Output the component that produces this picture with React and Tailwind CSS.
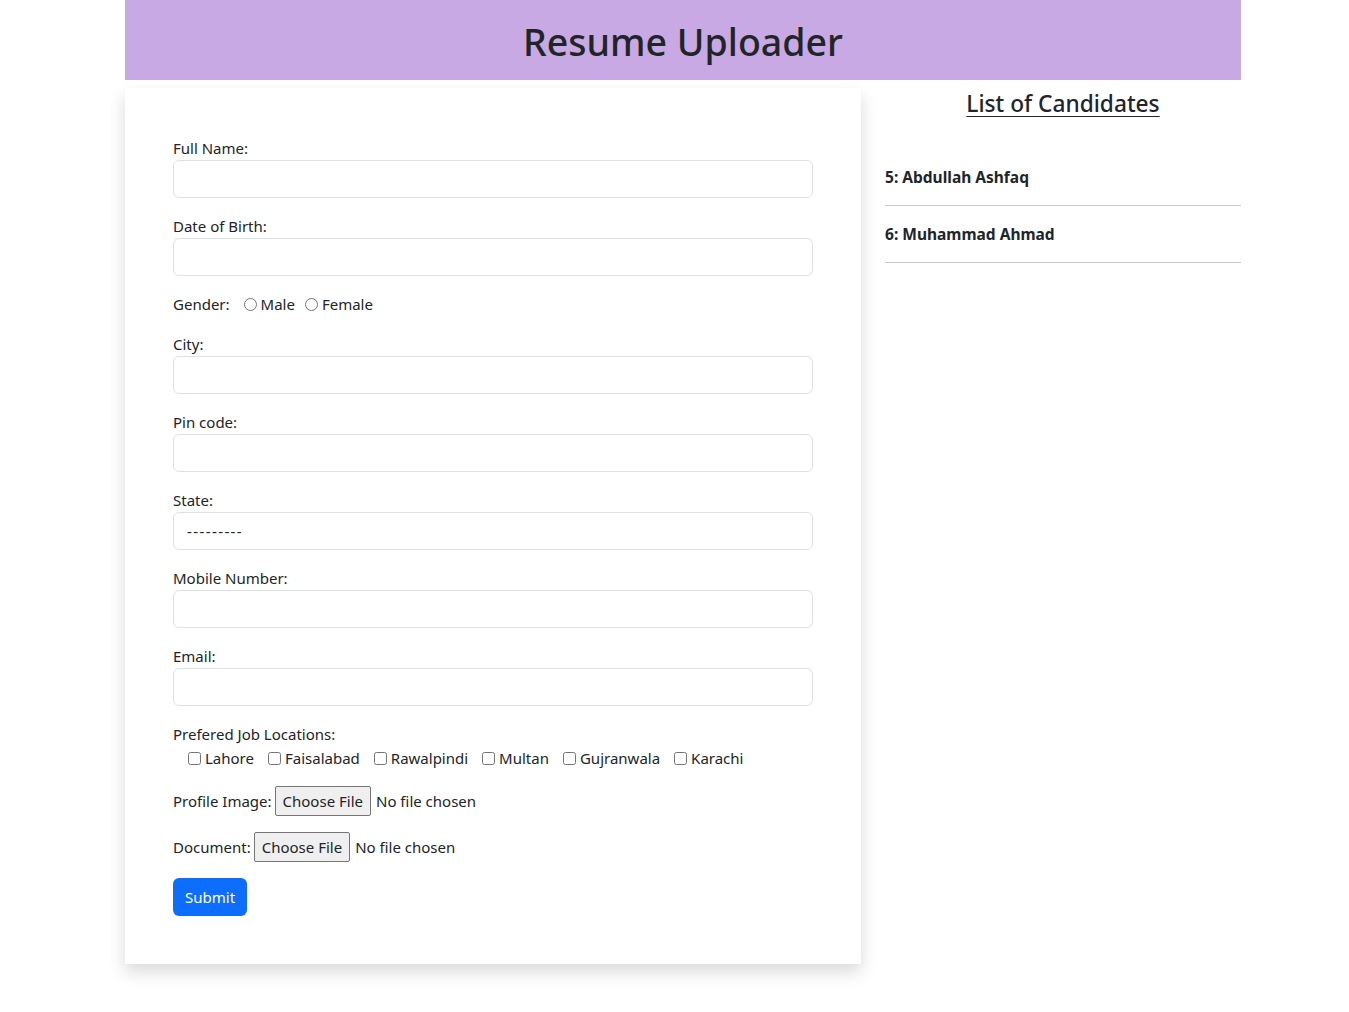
import React from "react";

const cities = ["Lahore", "Faisalabad", "Rawalpindi", "Multan", "Gujranwala", "Karachi"];
const candidates = [
  { id: 5, name: "Abdullah Ashfaq" },
  { id: 6, name: "Muhammad Ahmad" },
];

function Field({ label, children }) {
  return (
    <div className="mb-4">
      <label className="block leading-6">{label}</label>
      {children}
    </div>
  );
}

function TextBox({ value }) {
  return (
    <div className="h-[38px] w-full rounded-[6px] border border-[#dee2e6] bg-white px-[13px] flex items-center">
      {value}
    </div>
  );
}

function FilePick({ label }) {
  return (
    <div className="mb-4 flex items-center h-[30px]">
      <span>{label}</span>
      <span className="ml-[3px] h-[30px] flex items-center rounded-[2px] border border-[#767676] bg-[#efefef] px-[7px]">
        Choose File
      </span>
      <span className="ml-[5px]">No file chosen</span>
    </div>
  );
}

export default function App() {
  return (
    <div
      className="min-h-screen bg-white text-[#212529] text-[15px]"
      style={{ fontFamily: '"Noto Sans", "Open Sans", sans-serif' }}
    >
      <div className="ml-[125px] w-[1116px]">
        <div className="h-[80px] bg-[#c8a9e4] flex items-center justify-center pt-1">
          <h1 className="text-[37.5px] font-medium leading-none">Resume Uploader</h1>
        </div>

        <div className="flex gap-6 mt-2">
          <div className="w-[736px] bg-white px-12 pt-12 pb-12 shadow-[0_0.5rem_1rem_rgba(0,0,0,0.15)]">
            <Field label="Full Name:">
              <TextBox />
            </Field>
            <Field label="Date of Birth:">
              <TextBox />
            </Field>
            <div className="mb-4 flex items-center h-6">
              <span>Gender:</span>
              <input type="radio" name="g" className="ml-[14px] mr-1 h-[13px] w-[13px]" />
              <span>Male</span>
              <input type="radio" name="g" className="ml-[10px] mr-1 h-[13px] w-[13px]" />
              <span>Female</span>
            </div>
            <Field label="City:">
              <TextBox />
            </Field>
            <Field label="Pin code:">
              <TextBox />
            </Field>
            <Field label="State:">
              <TextBox value={<span className="tracking-[1.4px]">---------</span>} />
            </Field>
            <Field label="Mobile Number:">
              <TextBox />
            </Field>
            <Field label="Email:">
              <TextBox />
            </Field>
            <div className="mb-4">
              <div className="leading-6">Prefered Job Locations:</div>
              <div className="flex items-center h-6 pl-[15px] gap-[14px]">
                {cities.map((c) => (
                  <label key={c} className="flex items-center">
                    <input type="checkbox" className="mr-1 h-[13px] w-[13px]" />
                    <span>{c}</span>
                  </label>
                ))}
              </div>
            </div>
            <FilePick label="Profile Image:" />
            <FilePick label="Document:" />
            <button className="h-[38px] rounded-[6px] bg-[#0d6efd] px-3 text-white">Submit</button>
          </div>

          <div className="flex-1">
            <h4 className="text-center text-[22.7px] font-medium underline underline-offset-[4px] decoration-1 leading-[32px]">
              List of Candidates
            </h4>
            <div className="mt-[29px]">
              {candidates.map((c) => (
                <div key={c.id} className="border-b border-[#c9c9c9] h-[57px] flex items-center font-bold text-[15.5px] pt-0.5">
                  {c.id}: {c.name}
                </div>
              ))}
            </div>
          </div>
        </div>
      </div>
    </div>
  );
}
